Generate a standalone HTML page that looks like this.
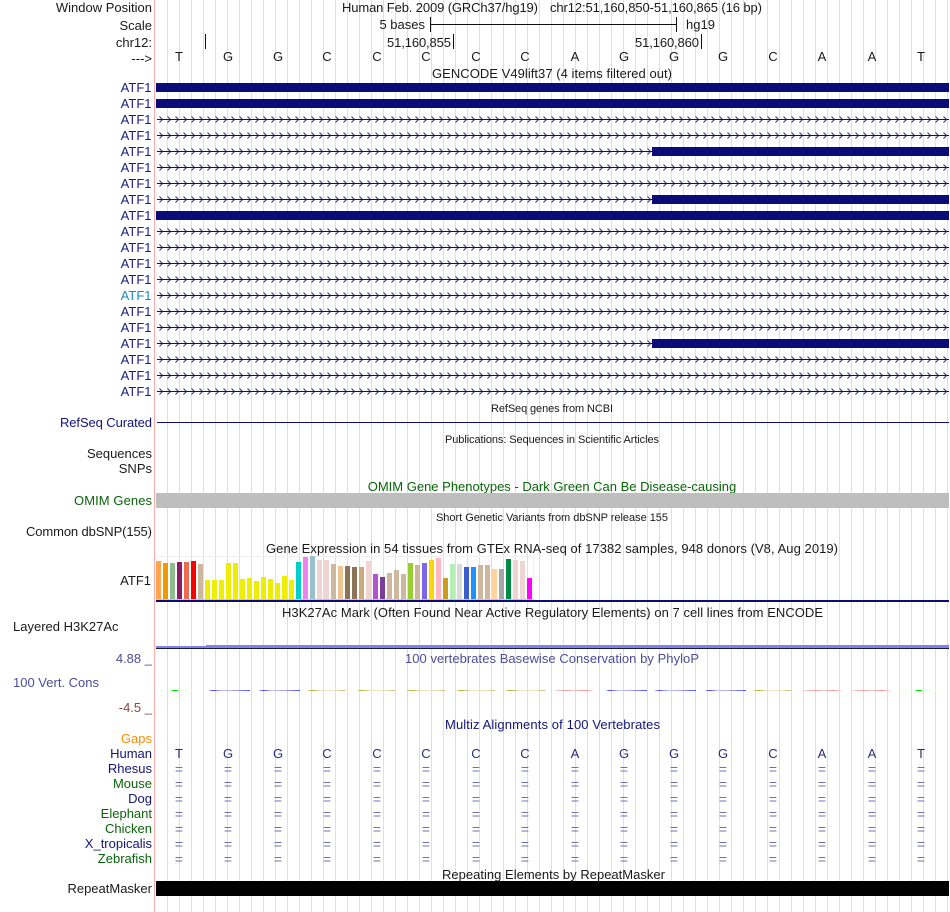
<!DOCTYPE html>
<html><head><meta charset="utf-8"><style>
html,body{margin:0;padding:0;background:#fff;width:950px;height:912px;overflow:hidden}
#g{position:absolute;left:156px;top:0;width:794px;height:912px;background-image:linear-gradient(to right,#dcdcf6 1px,transparent 1px);background-size:12px 912px;background-position:11px 0}
svg{position:absolute;left:0;top:0;display:block;font-family:"Liberation Sans",Arial,sans-serif;font-size:13px;fill:#1a1a1a}
.e{text-anchor:end}.m{text-anchor:middle}
.a{text-anchor:end;fill:#1c1c86}
.n{fill:#14147a;text-anchor:end}.g{fill:#0a640a;text-anchor:end}
.s{font-size:11px;text-anchor:middle}
.q{fill:#7070b0;text-anchor:middle;font-size:14px}
.h{fill:#2c2c80;text-anchor:middle}
</style></head><body>
<div id="g"></div>
<svg width="950" height="912" viewBox="0 0 950 912" xmlns="http://www.w3.org/2000/svg">
<defs>
<pattern id="arr" x="157" y="4" width="8" height="16" patternUnits="userSpaceOnUse"><path d="M2.5 0.5 L5.5 3.5 L2.5 6.5" fill="none" stroke="#2a2a8a" stroke-width="1"/><rect x="0" y="3" width="8" height="1" fill="#0c0c78"/></pattern>
<linearGradient id="gG"><stop offset="0" stop-color="#f2fdf2"/><stop offset=".4" stop-color="#e4fbe4"/><stop offset=".42" stop-color="#10e810"/><stop offset=".58" stop-color="#10e810"/><stop offset=".6" stop-color="#e4fbe4"/><stop offset="1" stop-color="#f2fdf2"/></linearGradient>
<linearGradient id="gB"><stop offset="0" stop-color="#c8c8f8"/><stop offset=".1" stop-color="#4444ee"/><stop offset=".3" stop-color="#c4c4f8"/><stop offset=".6" stop-color="#a8a8f4"/><stop offset="1" stop-color="#5050ee"/></linearGradient>
<linearGradient id="gO"><stop offset="0" stop-color="#d0d088"/><stop offset=".12" stop-color="#b0b040"/><stop offset=".35" stop-color="#e6e6c4"/><stop offset=".75" stop-color="#e6e6c4"/><stop offset="1" stop-color="#c0c070"/></linearGradient>
<linearGradient id="gR"><stop offset="0" stop-color="#fbd4d4"/><stop offset=".3" stop-color="#f0a0a0"/><stop offset=".5" stop-color="#f8c8c8"/><stop offset=".8" stop-color="#f09898"/><stop offset="1" stop-color="#fbdcdc"/></linearGradient>
</defs>
<rect x="154" y="0" width="1" height="912" fill="#ffaaaa"/>

<text x="152" y="12" class="e">Window Position</text>
<text x="152" y="30" class="e">Scale</text>
<text x="152" y="47" class="e">chr12:</text>
<text x="152" y="63" class="e">---&gt;</text>
<text x="342" y="12" textLength="196">Human Feb. 2009 (GRCh37/hg19)</text>
<text x="550" y="12" textLength="212">chr12:51,160,850-51,160,865 (16 bp)</text>
<text x="425" y="29" class="e">5 bases</text>
<text x="686" y="29">hg19</text>
<rect x="430" y="24" width="247" height="1" fill="#111"/>
<rect x="430" y="17" width="1" height="15" fill="#111"/>
<rect x="676" y="17" width="1" height="15" fill="#111"/>
<text x="387" y="47" textLength="64">51,160,855</text>
<text x="635" y="47" textLength="64">51,160,860</text>
<rect x="205" y="34" width="1" height="15" fill="#111"/>
<rect x="453" y="34" width="1" height="15" fill="#111"/>
<rect x="701" y="34" width="1" height="15" fill="#111"/>

<g class="m"><text x="179" y="61" class="m">T</text><text x="228" y="61" class="m">G</text><text x="278" y="61" class="m">G</text><text x="327" y="61" class="m">C</text><text x="377" y="61" class="m">C</text><text x="426" y="61" class="m">C</text><text x="476" y="61" class="m">C</text><text x="525" y="61" class="m">C</text><text x="575" y="61" class="m">A</text><text x="624" y="61" class="m">G</text><text x="674" y="61" class="m">G</text><text x="723" y="61" class="m">G</text><text x="773" y="61" class="m">C</text><text x="822" y="61" class="m">A</text><text x="872" y="61" class="m">A</text><text x="921" y="61" class="m">T</text></g>

<text x="432" y="78" textLength="240">GENCODE V49lift37 (4 items filtered out)</text>

<text x="151.5" y="92" class="a">ATF1</text><text x="151.5" y="108" class="a">ATF1</text><text x="151.5" y="124" class="a">ATF1</text><text x="151.5" y="140" class="a">ATF1</text><text x="151.5" y="156" class="a">ATF1</text><text x="151.5" y="172" class="a">ATF1</text><text x="151.5" y="188" class="a">ATF1</text><text x="151.5" y="204" class="a">ATF1</text><text x="151.5" y="220" class="a">ATF1</text><text x="151.5" y="236" class="a">ATF1</text><text x="151.5" y="252" class="a">ATF1</text><text x="151.5" y="268" class="a">ATF1</text><text x="151.5" y="284" class="a">ATF1</text><text x="151.5" y="300" class="a" style="fill:#1a8cc0">ATF1</text><text x="151.5" y="316" class="a">ATF1</text><text x="151.5" y="332" class="a">ATF1</text><text x="151.5" y="348" class="a">ATF1</text><text x="151.5" y="364" class="a">ATF1</text><text x="151.5" y="380" class="a">ATF1</text><text x="151.5" y="396" class="a">ATF1</text>

<g fill="#0c0c78">
<rect x="156" y="83" width="793" height="9"/>
<rect x="156" y="99" width="793" height="9"/>
<rect x="156" y="211" width="793" height="9"/>
</g>
<g fill="url(#arr)">
<rect x="157" y="116" width="792" height="7"/>
<rect x="157" y="132" width="792" height="7"/>
<rect x="157" y="148" width="495" height="7"/>
<rect x="157" y="164" width="792" height="7"/>
<rect x="157" y="180" width="792" height="7"/>
<rect x="157" y="196" width="495" height="7"/>
<rect x="157" y="228" width="792" height="7"/>
<rect x="157" y="244" width="792" height="7"/>
<rect x="157" y="260" width="792" height="7"/>
<rect x="157" y="276" width="792" height="7"/>
<rect x="157" y="292" width="792" height="7"/>
<rect x="157" y="308" width="792" height="7"/>
<rect x="157" y="324" width="792" height="7"/>
<rect x="157" y="340" width="495" height="7"/>
<rect x="157" y="356" width="792" height="7"/>
<rect x="157" y="372" width="792" height="7"/>
<rect x="157" y="388" width="792" height="7"/>
</g>
<g fill="#0c0c78">
<rect x="652" y="147" width="297" height="9"/>
<rect x="652" y="195" width="297" height="9"/>
<rect x="652" y="339" width="297" height="9"/>
</g>

<text x="491" y="412" style="font-size:11px" textLength="122">RefSeq genes from NCBI</text>
<text x="60" y="427" style="fill:#14147a" textLength="92">RefSeq Curated</text>
<rect x="157" y="422" width="792" height="1" fill="#0c0c78"/>
<text x="445" y="443" style="font-size:11px" textLength="214">Publications: Sequences in Scientific Articles</text>
<text x="152" y="458" class="e">Sequences</text>
<text x="152" y="473" class="e">SNPs</text>
<text x="552" y="491" class="m" style="fill:#0a640a">OMIM Gene Phenotypes - Dark Green Can Be Disease-causing</text>
<text x="74" y="505" style="fill:#0a640a" textLength="78">OMIM Genes</text>
<rect x="156" y="493" width="793" height="15" fill="#bebebe"/>
<text x="436" y="521" style="font-size:11px" textLength="232">Short Genetic Variants from dbSNP release 155</text>
<text x="26" y="536" textLength="126">Common dbSNP(155)</text>
<text x="266" y="553" textLength="572">Gene Expression in 54 tissues from GTEx RNA-seq of 17382 samples, 948 donors (V8, Aug 2019)</text>
<text x="151" y="585" class="e">ATF1</text>

<rect x="156" y="556" width="377" height="1" fill="#f0f0f0"/>
<rect x="533" y="556" width="1" height="43" fill="#f0f0f0"/>
<rect x="156" y="556" width="1" height="43" fill="#f0f0f0"/>
<rect x="156" y="599" width="378" height="1" fill="#c8c8c8"/>
<rect x="156" y="561" width="5" height="38" fill="#FFA54F"/>
<rect x="163" y="563" width="5" height="36" fill="#EE9A00"/>
<rect x="170" y="563" width="5" height="36" fill="#8FBC8F"/>
<rect x="177" y="562" width="5" height="37" fill="#8B1C62"/>
<rect x="184" y="562" width="5" height="37" fill="#EE6A50"/>
<rect x="191" y="561" width="5" height="38" fill="#FF0000"/>
<rect x="198" y="564" width="5" height="35" fill="#CDB79E"/>
<rect x="205" y="580" width="5" height="19" fill="#EEEE00"/>
<rect x="212" y="580" width="5" height="19" fill="#EEEE00"/>
<rect x="219" y="580" width="5" height="19" fill="#EEEE00"/>
<rect x="226" y="563" width="5" height="36" fill="#EEEE00"/>
<rect x="233" y="563" width="5" height="36" fill="#EEEE00"/>
<rect x="240" y="579" width="5" height="20" fill="#EEEE00"/>
<rect x="247" y="578" width="5" height="21" fill="#EEEE00"/>
<rect x="254" y="581" width="5" height="18" fill="#EEEE00"/>
<rect x="261" y="577" width="5" height="22" fill="#EEEE00"/>
<rect x="268" y="579" width="5" height="20" fill="#EEEE00"/>
<rect x="275" y="583" width="5" height="16" fill="#EEEE00"/>
<rect x="282" y="576" width="5" height="23" fill="#EEEE00"/>
<rect x="289" y="580" width="5" height="19" fill="#EEEE00"/>
<rect x="296" y="562" width="5" height="37" fill="#00CDCD"/>
<rect x="303" y="557" width="5" height="42" fill="#EE82EE"/>
<rect x="310" y="556" width="5" height="43" fill="#9AC0CD"/>
<rect x="317" y="560" width="5" height="39" fill="#EED5D2"/>
<rect x="324" y="560" width="5" height="39" fill="#EED5D2"/>
<rect x="331" y="564" width="5" height="35" fill="#CDB79E"/>
<rect x="338" y="566" width="5" height="33" fill="#EEC591"/>
<rect x="345" y="566" width="5" height="33" fill="#8B7355"/>
<rect x="352" y="567" width="5" height="32" fill="#8B7355"/>
<rect x="359" y="567" width="5" height="32" fill="#CDAA7D"/>
<rect x="366" y="561" width="5" height="38" fill="#EED5D2"/>
<rect x="373" y="574" width="5" height="25" fill="#B452CD"/>
<rect x="380" y="577" width="5" height="22" fill="#7D3C98"/>
<rect x="387" y="573" width="5" height="26" fill="#CDB79E"/>
<rect x="394" y="570" width="5" height="29" fill="#CDB79E"/>
<rect x="401" y="574" width="5" height="25" fill="#CDB79E"/>
<rect x="408" y="563" width="5" height="36" fill="#9ACD32"/>
<rect x="415" y="565" width="5" height="34" fill="#CDB79E"/>
<rect x="422" y="563" width="5" height="36" fill="#7A67EE"/>
<rect x="429" y="560" width="5" height="39" fill="#FFD700"/>
<rect x="436" y="558" width="5" height="41" fill="#FFB6C1"/>
<rect x="443" y="578" width="5" height="21" fill="#CD9B1D"/>
<rect x="450" y="564" width="5" height="35" fill="#B4EEB4"/>
<rect x="457" y="564" width="5" height="35" fill="#D9D9D9"/>
<rect x="464" y="567" width="5" height="32" fill="#3A5FCD"/>
<rect x="471" y="567" width="5" height="32" fill="#1E90FF"/>
<rect x="478" y="565" width="5" height="34" fill="#CDB79E"/>
<rect x="485" y="565" width="5" height="34" fill="#CDB79E"/>
<rect x="492" y="569" width="5" height="30" fill="#FFD39B"/>
<rect x="499" y="569" width="5" height="30" fill="#A6A6A6"/>
<rect x="506" y="559" width="5" height="40" fill="#008B45"/>
<rect x="513" y="560" width="5" height="39" fill="#EED5D2"/>
<rect x="520" y="561" width="5" height="38" fill="#EED5D2"/>
<rect x="527" y="578" width="5" height="21" fill="#FF00FF"/>
<rect x="156" y="600" width="793" height="2" fill="#0c0c78"/>

<text x="282" y="617" textLength="541">H3K27Ac Mark (Often Found Near Active Regulatory Elements) on 7 cell lines from ENCODE</text>
<text x="13" y="631">Layered H3K27Ac</text>
<rect x="156" y="646" width="50" height="2" fill="#8080f0"/>
<rect x="206" y="645" width="743" height="3" fill="#8080f0"/>
<rect x="156" y="648" width="793" height="1" fill="#1a1a30"/>

<text x="152" y="663" class="e" style="fill:#4d4d99" xml:space="preserve">4.88 _</text>
<text x="405" y="663" style="fill:#4d4d99" textLength="294">100 vertebrates Basewise Conservation by PhyloP</text>
<text x="13" y="687" style="fill:#4d4d99">100 Vert. Cons</text>
<text x="152" y="712" class="e" style="fill:#8a4848" xml:space="preserve">-4.5 _</text>

<rect x="157" y="690" width="36" height="1" fill="url(#gG)"/>
<rect x="209" y="690" width="41" height="1" fill="url(#gB)"/>
<rect x="259" y="690" width="41" height="1" fill="url(#gB)"/>
<rect x="308" y="690" width="37" height="1" fill="url(#gO)"/>
<rect x="358" y="690" width="37" height="1" fill="url(#gO)"/>
<rect x="407" y="690" width="38" height="1" fill="url(#gO)"/>
<rect x="457" y="690" width="38" height="1" fill="url(#gO)"/>
<rect x="506" y="690" width="39" height="1" fill="url(#gO)"/>
<rect x="555" y="690" width="38" height="1" fill="url(#gR)"/>
<rect x="606" y="690" width="41" height="1" fill="url(#gB)"/>
<rect x="655" y="690" width="41" height="1" fill="url(#gB)"/>
<rect x="705" y="690" width="41" height="1" fill="url(#gB)"/>
<rect x="754" y="690" width="37" height="1" fill="url(#gO)"/>
<rect x="804" y="690" width="37" height="1" fill="url(#gR)"/>
<rect x="853" y="690" width="37" height="1" fill="url(#gR)"/>
<rect x="901" y="690" width="36" height="1" fill="url(#gG)"/>

<text x="445" y="729" style="fill:#14147a" textLength="215">Multiz Alignments of 100 Vertebrates</text>
<text x="152" y="743" class="e" style="fill:#ff8c00">Gaps</text>
<text x="152" y="758" class="n">Human</text>
<text x="152" y="773" class="n">Rhesus</text>
<text x="152" y="788" class="g">Mouse</text>
<text x="152" y="803" class="n">Dog</text>
<text x="152" y="818" class="g">Elephant</text>
<text x="152" y="833" class="g">Chicken</text>
<text x="152" y="848" class="n">X_tropicalis</text>
<text x="152" y="863" class="g">Zebrafish</text>

<text x="179" y="758" class="h">T</text><text x="228" y="758" class="h">G</text><text x="278" y="758" class="h">G</text><text x="327" y="758" class="h">C</text><text x="377" y="758" class="h">C</text><text x="426" y="758" class="h">C</text><text x="476" y="758" class="h">C</text><text x="525" y="758" class="h">C</text><text x="575" y="758" class="h">A</text><text x="624" y="758" class="h">G</text><text x="674" y="758" class="h">G</text><text x="723" y="758" class="h">G</text><text x="773" y="758" class="h">C</text><text x="822" y="758" class="h">A</text><text x="872" y="758" class="h">A</text><text x="921" y="758" class="h">T</text>

<text x="179" y="774" class="q">=</text><text x="228" y="774" class="q">=</text><text x="278" y="774" class="q">=</text><text x="327" y="774" class="q">=</text><text x="377" y="774" class="q">=</text><text x="426" y="774" class="q">=</text><text x="476" y="774" class="q">=</text><text x="525" y="774" class="q">=</text><text x="575" y="774" class="q">=</text><text x="624" y="774" class="q">=</text><text x="674" y="774" class="q">=</text><text x="723" y="774" class="q">=</text><text x="773" y="774" class="q">=</text><text x="822" y="774" class="q">=</text><text x="872" y="774" class="q">=</text><text x="921" y="774" class="q">=</text>
<text x="179" y="789" class="q">=</text><text x="228" y="789" class="q">=</text><text x="278" y="789" class="q">=</text><text x="327" y="789" class="q">=</text><text x="377" y="789" class="q">=</text><text x="426" y="789" class="q">=</text><text x="476" y="789" class="q">=</text><text x="525" y="789" class="q">=</text><text x="575" y="789" class="q">=</text><text x="624" y="789" class="q">=</text><text x="674" y="789" class="q">=</text><text x="723" y="789" class="q">=</text><text x="773" y="789" class="q">=</text><text x="822" y="789" class="q">=</text><text x="872" y="789" class="q">=</text><text x="921" y="789" class="q">=</text>
<text x="179" y="804" class="q">=</text><text x="228" y="804" class="q">=</text><text x="278" y="804" class="q">=</text><text x="327" y="804" class="q">=</text><text x="377" y="804" class="q">=</text><text x="426" y="804" class="q">=</text><text x="476" y="804" class="q">=</text><text x="525" y="804" class="q">=</text><text x="575" y="804" class="q">=</text><text x="624" y="804" class="q">=</text><text x="674" y="804" class="q">=</text><text x="723" y="804" class="q">=</text><text x="773" y="804" class="q">=</text><text x="822" y="804" class="q">=</text><text x="872" y="804" class="q">=</text><text x="921" y="804" class="q">=</text>
<text x="179" y="819" class="q">=</text><text x="228" y="819" class="q">=</text><text x="278" y="819" class="q">=</text><text x="327" y="819" class="q">=</text><text x="377" y="819" class="q">=</text><text x="426" y="819" class="q">=</text><text x="476" y="819" class="q">=</text><text x="525" y="819" class="q">=</text><text x="575" y="819" class="q">=</text><text x="624" y="819" class="q">=</text><text x="674" y="819" class="q">=</text><text x="723" y="819" class="q">=</text><text x="773" y="819" class="q">=</text><text x="822" y="819" class="q">=</text><text x="872" y="819" class="q">=</text><text x="921" y="819" class="q">=</text>
<text x="179" y="834" class="q">=</text><text x="228" y="834" class="q">=</text><text x="278" y="834" class="q">=</text><text x="327" y="834" class="q">=</text><text x="377" y="834" class="q">=</text><text x="426" y="834" class="q">=</text><text x="476" y="834" class="q">=</text><text x="525" y="834" class="q">=</text><text x="575" y="834" class="q">=</text><text x="624" y="834" class="q">=</text><text x="674" y="834" class="q">=</text><text x="723" y="834" class="q">=</text><text x="773" y="834" class="q">=</text><text x="822" y="834" class="q">=</text><text x="872" y="834" class="q">=</text><text x="921" y="834" class="q">=</text>
<text x="179" y="849" class="q">=</text><text x="228" y="849" class="q">=</text><text x="278" y="849" class="q">=</text><text x="327" y="849" class="q">=</text><text x="377" y="849" class="q">=</text><text x="426" y="849" class="q">=</text><text x="476" y="849" class="q">=</text><text x="525" y="849" class="q">=</text><text x="575" y="849" class="q">=</text><text x="624" y="849" class="q">=</text><text x="674" y="849" class="q">=</text><text x="723" y="849" class="q">=</text><text x="773" y="849" class="q">=</text><text x="822" y="849" class="q">=</text><text x="872" y="849" class="q">=</text><text x="921" y="849" class="q">=</text>
<text x="179" y="864" class="q">=</text><text x="228" y="864" class="q">=</text><text x="278" y="864" class="q">=</text><text x="327" y="864" class="q">=</text><text x="377" y="864" class="q">=</text><text x="426" y="864" class="q">=</text><text x="476" y="864" class="q">=</text><text x="525" y="864" class="q">=</text><text x="575" y="864" class="q">=</text><text x="624" y="864" class="q">=</text><text x="674" y="864" class="q">=</text><text x="723" y="864" class="q">=</text><text x="773" y="864" class="q">=</text><text x="822" y="864" class="q">=</text><text x="872" y="864" class="q">=</text><text x="921" y="864" class="q">=</text>

<text x="442" y="879" textLength="223">Repeating Elements by RepeatMasker</text>
<text x="152" y="893" class="e">RepeatMasker</text>
<rect x="156" y="881" width="793" height="15" fill="#000"/>
</svg>
</body></html>
